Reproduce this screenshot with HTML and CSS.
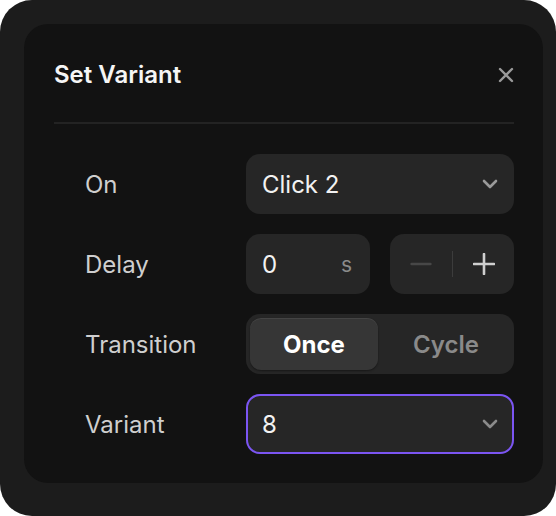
FILE: index.html
```html
<!DOCTYPE html>
<html>
<head>
<meta charset="utf-8">
<link rel="stylesheet" href="styles.css">
</head>
<body>
<div class="frame">
  <div class="panel">
    <div class="header">
      <h1 class="title">Set Variant</h1>
      <button class="close" aria-label="Close">
        <svg width="16" height="16" viewBox="0 0 16 16"><path d="M2 2 L14 14 M14 2 L2 14" stroke="#9a9a9a" stroke-width="2.4" stroke-linecap="round" fill="none"/></svg>
      </button>
    </div>
    <div class="divider"></div>
    <div class="form">
      <div class="label">On</div>
      <div class="control select">
        <span class="value">Click 2</span>
        <svg class="chev" width="16" height="10" viewBox="0 0 16 10"><path d="M2 2 L8 8 L14 2" stroke="#9a9a9a" stroke-width="2.6" stroke-linecap="round" stroke-linejoin="round" fill="none"/></svg>
      </div>

      <div class="label">Delay</div>
      <div class="pair">
        <div class="control input">
          <span class="value">0</span>
          <span class="unit">s</span>
        </div>
        <div class="control stepper">
          <svg width="22" height="22" viewBox="0 0 22 22"><path d="M1.5 11 H20.5" stroke="#474747" stroke-width="2.4" stroke-linecap="round"/></svg>
          <span class="sep"></span>
          <svg width="22" height="22" viewBox="0 0 22 22"><path d="M1 11 H21 M11 1 V21" stroke="#cfcfcf" stroke-width="2.6" stroke-linecap="round"/></svg>
        </div>
      </div>

      <div class="label">Transition</div>
      <div class="control segmented">
        <button class="seg active">Once</button>
        <button class="seg">Cycle</button>
      </div>

      <div class="label">Variant</div>
      <div class="control select focused">
        <span class="value">8</span>
        <svg class="chev" width="16" height="10" viewBox="0 0 16 10"><path d="M2 2 L8 8 L14 2" stroke="#8a8a8a" stroke-width="2.6" stroke-linecap="round" stroke-linejoin="round" fill="none"/></svg>
      </div>
    </div>
  </div>
</div>
</body>
</html>
```

FILE: styles.css
```css
* { box-sizing: border-box; }
html, body { margin: 0; padding: 0; background: #ffffff; }
body { font-family: Inter, "Noto Sans", sans-serif; }

.frame {
  width: 556px;
  height: 516px;
  background: #1c1c1c;
  border-radius: 32px;
  padding: 24px 13px 33px 24px;
}

.panel {
  height: 100%;
  background: #121212;
  border-radius: 24px;
  padding: 37px 29px 0 30px;
}

.header {
  height: 28px;
  display: flex;
  align-items: center;
  justify-content: space-between;
}

.title {
  margin: 0;
  font-size: 24px;
  line-height: 28px;
  font-weight: 600;
  color: #f5f5f5;
}

.close {
  background: none;
  border: 0;
  padding: 0;
  width: 16px;
  height: 16px;
  display: flex;
}

.divider {
  height: 2px;
  background: #232323;
  margin-top: 33px;
}

.form {
  margin-top: 30px;
  display: grid;
  grid-template-columns: 192px 1fr;
  grid-auto-rows: 60px;
  row-gap: 20px;
}

.label {
  padding-left: 31px;
  display: flex;
  align-items: center;
  font-size: 24px;
  color: #cfcfcf;
}

.control {
  background: #262626;
  border-radius: 14px;
  display: flex;
  align-items: center;
  font-size: 24px;
  color: #f2f2f2;
}

.select {
  padding: 0 16px;
  justify-content: space-between;
}

.focused {
  border: 2px solid #7b55f2;
  padding: 0 14px;
}

.pair {
  display: grid;
  grid-template-columns: 1fr 1fr;
  column-gap: 20px;
}

.input {
  padding: 0 18px 0 16px;
  justify-content: space-between;
}

.unit {
  color: #8a8a8a;
  font-size: 21px;
}

.stepper {
  justify-content: center;
  gap: 20px;
}

.sep {
  width: 1px;
  height: 26px;
  background: #3c3c3c;
}

.segmented {
  padding: 4px;
  gap: 4px;
  align-items: stretch;
}

.seg {
  flex: 1;
  border: 0;
  background: transparent;
  border-radius: 11px;
  font-family: inherit;
  font-size: 24px;
  font-weight: 600;
  color: #8a8a8a;
}

.seg.active {
  background: #363636;
  color: #ffffff;
  font-weight: 700;
  box-shadow: inset 0 1px 0 rgba(255,255,255,0.07), 0 1px 2px rgba(0,0,0,0.4);
}
```
